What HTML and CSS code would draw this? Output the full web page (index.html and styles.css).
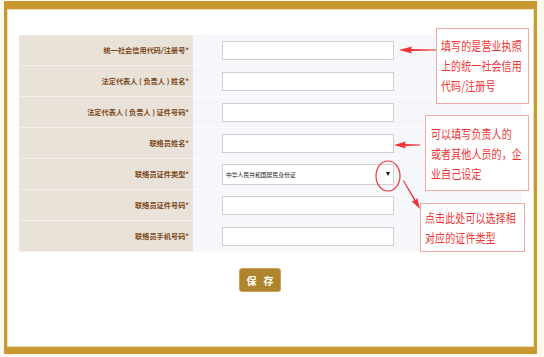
FILE: index.html
```html
<!DOCTYPE html>
<html lang="zh-CN">
<head>
    <meta charset="UTF-8">
    <meta name="viewport" content="width=device-width, initial-scale=1.0">
    <title>联络员信息</title>
    <link rel="stylesheet" href="styles.css">
</head>
<body>
    <div class="page">
        <div class="frame">
            <div class="frame-inner">
                <div class="form-table">
                    <div class="label">统一社会信用代码/注册号*</div>
                    <div class="value"><span class="input"></span></div>

                    <div class="label">法定代表人 ( 负责人 ) 姓名*</div>
                    <div class="value"><span class="input"></span></div>

                    <div class="label">法定代表人 ( 负责人 ) 证件号码*</div>
                    <div class="value"><span class="input"></span></div>

                    <div class="label">联络员姓名*</div>
                    <div class="value"><span class="input"></span></div>

                    <div class="label">联络员证件类型*</div>
                    <div class="value">
                        <span class="select">
                            <span class="select-text">中华人民共和国居民身份证</span>
                            <span class="caret"></span>
                        </span>
                    </div>

                    <div class="label">联络员证件号码*</div>
                    <div class="value"><span class="input"></span></div>

                    <div class="label">联络员手机号码*</div>
                    <div class="value"><span class="input"></span></div>
                </div>

                <div class="actions">
                    <span class="btn-save"><span>保</span><span>存</span></span>
                </div>
            </div>
        </div>

        <!-- annotations drawn over the form -->
        <div class="note note-1"><span class="note-text">填写的是营业执照<br>上的统一社会信用<br>代码/注册号</span></div>
        <div class="note note-2"><span class="note-text">可以填写负责人的<br>或者其他人员的，企<br>业自己设定</span></div>
        <div class="note note-3"><span class="note-text">点击此处可以选择相<br>对应的证件类型</span></div>

        <svg class="marks" width="544" height="357" viewBox="0 0 544 357">
            <g fill="#ef3434">
                <polygon transform="translate(399,50)" points="0,0 13,-3.6 12,-1 37,-0.6 37,0.6 12,1 13,3.6"/>
                <polygon transform="translate(394,145)" points="0,0 12,-3.4 11,-1 26,-0.6 26,0.6 11,1 12,3.4"/>
                <polygon transform="translate(420,209) rotate(-120.4)" points="0,0 11,-3.2 10,-0.8 33,-0.5 33,0.5 10,0.8 11,3.2"/>
            </g>
            <ellipse cx="388" cy="176" rx="12" ry="15" fill="none" stroke="#ef3434" stroke-width="1.2"/>
        </svg>
    </div>
</body>
</html>
```

FILE: styles.css
```css
body {
    margin: 0;
    background: #fdf9ef;
    font-family: "Noto Sans CJK SC", "Noto Sans", sans-serif;
}

.page {
    position: relative;
    width: 544px;
    height: 357px;
    padding: 1px 0 0 4px;
    box-sizing: border-box;
    overflow: hidden;
}

.frame {
    width: 533px;
    height: 353px;
    box-sizing: border-box;
    border-style: solid;
    border-color: #c9992f;
    border-width: 8px 3px 7px 3px;
    background: #fff;
}

.frame-inner {
    height: 100%;
    box-sizing: border-box;
    border: 1px solid #eedfb8;
    padding: 25px 11px 0 11px;
}

.form-table {
    display: grid;
    grid-template-columns: 174px 1fr;
    grid-auto-rows: 31px;
}

.label {
    display: flex;
    align-items: center;
    justify-content: flex-end;
    padding-right: 4px;
    background: #e9e2d9;
    border-bottom: 1px solid #f3eee7;
    color: #7a4716;
    font-size: 7.2px;
    font-weight: bold;
    white-space: nowrap;
}

.value {
    display: flex;
    align-items: center;
    padding-left: 29px;
    background: #f5f7fa;
    border-bottom: 1px solid #fbfcfd;
}

.input {
    display: block;
    width: 172px;
    height: 19px;
    box-sizing: border-box;
    border: 1px solid #cfcfcf;
    background: #fff;
}

.select {
    display: flex;
    align-items: center;
    justify-content: space-between;
    width: 172px;
    height: 21px;
    box-sizing: border-box;
    border: 1px solid #cfcfcf;
    background: #fff;
    padding: 0 3px 0 3px;
}

.select-text {
    font-size: 5.8px;
    color: #222;
    white-space: nowrap;
}

.caret {
    width: 0;
    height: 0;
    border-left: 2.5px solid transparent;
    border-right: 2.5px solid transparent;
    border-top: 4px solid #111;
}

.actions {
    display: flex;
    justify-content: center;
    padding-right: 21px;
    margin-top: 16px;
}

.btn-save {
    display: flex;
    align-items: center;
    justify-content: center;
    gap: 7px;
    width: 42px;
    height: 24px;
    box-sizing: border-box;
    border: 1px solid #c8a356;
    border-radius: 3px;
    background: #ae842c;
    color: #fff;
    font-size: 10px;
    font-weight: bold;
}

.note {
    position: absolute;
    box-sizing: border-box;
    border: 1px solid #f5a7a7;
    background: #fff;
    color: #ef3434;
    font-size: 10px;
    white-space: nowrap;
}

.note-text {
    display: block;
    line-height: 16px;
    letter-spacing: 0.1px;
    transform: scaleY(1.25);
    transform-origin: top left;
}

.note-1 {
    left: 436px;
    top: 28px;
    width: 93px;
    height: 76px;
    padding: 7px 0 0 4px;
}

.note-2 {
    left: 425px;
    top: 115px;
    width: 104px;
    height: 76px;
    padding: 8px 0 0 5px;
}

.note-3 {
    left: 420px;
    top: 203px;
    width: 105px;
    height: 49px;
    padding: 4px 0 0 4px;
}

.marks {
    position: absolute;
    left: 0;
    top: 0;
    pointer-events: none;
}
```
